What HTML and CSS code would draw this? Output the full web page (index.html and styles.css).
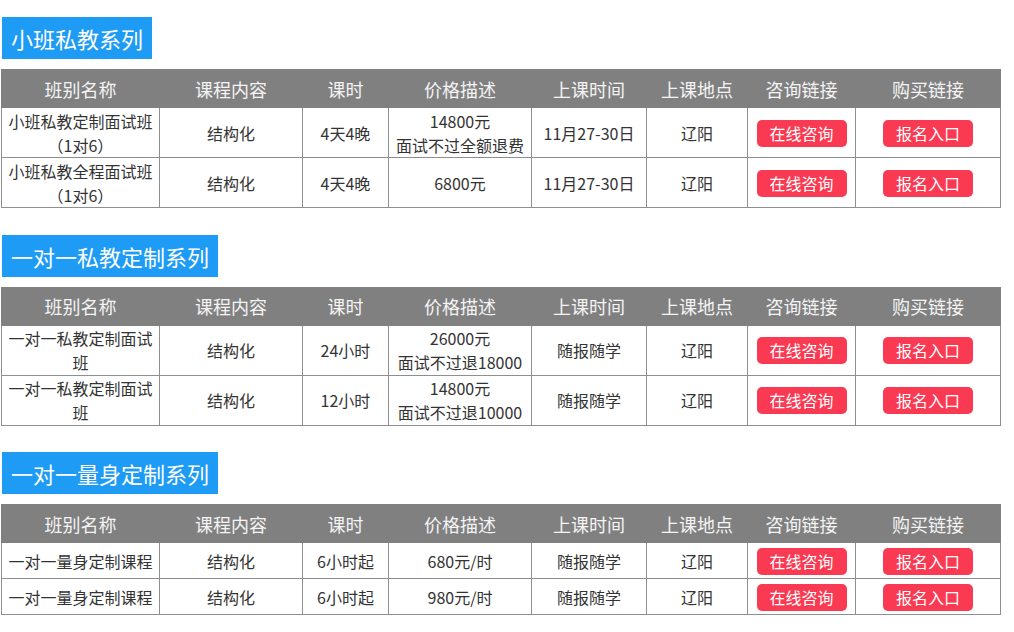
FILE: index.html
```html
<!DOCTYPE html>
<html lang="zh-CN">
<head>
<meta charset="utf-8">
<title>课程</title>
<link rel="stylesheet" href="styles.css">
</head>
<body>
<div class="page">
  <section class="series">
    <h2 class="title">小班私教系列</h2>
    <table class="course">
      <colgroup><col class="c1"><col class="c2"><col class="c3"><col class="c4"><col class="c5"><col class="c6"><col class="c7"><col class="c8"></colgroup>
      <thead><tr><th>班别名称</th><th>课程内容</th><th>课时</th><th>价格描述</th><th>上课时间</th><th>上课地点</th><th>咨询链接</th><th>购买链接</th></tr></thead>
      <tbody>
        <tr class="tall"><td>小班私教定制面试班<br>（1对6）</td><td>结构化</td><td>4天4晚</td><td>14800元<br>面试不过全额退费</td><td>11月27-30日</td><td>辽阳</td><td><a class="btn">在线咨询</a></td><td><a class="btn">报名入口</a></td></tr>
        <tr class="tall"><td>小班私教全程面试班<br>（1对6）</td><td>结构化</td><td>4天4晚</td><td>6800元</td><td>11月27-30日</td><td>辽阳</td><td><a class="btn">在线咨询</a></td><td><a class="btn">报名入口</a></td></tr>
      </tbody>
    </table>
  </section>
  <section class="series">
    <h2 class="title">一对一私教定制系列</h2>
    <table class="course">
      <colgroup><col class="c1"><col class="c2"><col class="c3"><col class="c4"><col class="c5"><col class="c6"><col class="c7"><col class="c8"></colgroup>
      <thead><tr><th>班别名称</th><th>课程内容</th><th>课时</th><th>价格描述</th><th>上课时间</th><th>上课地点</th><th>咨询链接</th><th>购买链接</th></tr></thead>
      <tbody>
        <tr class="tall"><td>一对一私教定制面试<br>班</td><td>结构化</td><td>24小时</td><td>26000元<br>面试不过退18000</td><td>随报随学</td><td>辽阳</td><td><a class="btn">在线咨询</a></td><td><a class="btn">报名入口</a></td></tr>
        <tr class="tall"><td>一对一私教定制面试<br>班</td><td>结构化</td><td>12小时</td><td>14800元<br>面试不过退10000</td><td>随报随学</td><td>辽阳</td><td><a class="btn">在线咨询</a></td><td><a class="btn">报名入口</a></td></tr>
      </tbody>
    </table>
  </section>
  <section class="series">
    <h2 class="title">一对一量身定制系列</h2>
    <table class="course">
      <colgroup><col class="c1"><col class="c2"><col class="c3"><col class="c4"><col class="c5"><col class="c6"><col class="c7"><col class="c8"></colgroup>
      <thead><tr><th>班别名称</th><th>课程内容</th><th>课时</th><th>价格描述</th><th>上课时间</th><th>上课地点</th><th>咨询链接</th><th>购买链接</th></tr></thead>
      <tbody>
        <tr class="short"><td>一对一量身定制课程</td><td>结构化</td><td>6小时起</td><td>680元/时</td><td>随报随学</td><td>辽阳</td><td><a class="btn">在线咨询</a></td><td><a class="btn">报名入口</a></td></tr>
        <tr class="short"><td>一对一量身定制课程</td><td>结构化</td><td>6小时起</td><td>980元/时</td><td>随报随学</td><td>辽阳</td><td><a class="btn">在线咨询</a></td><td><a class="btn">报名入口</a></td></tr>
      </tbody>
    </table>
  </section>
</div>
</body>
</html>
```

FILE: styles.css
```css
* { box-sizing: border-box; }
html, body { margin: 0; padding: 0; background: #fff; }
body {
  font-family: "Noto Sans CJK SC", "Microsoft YaHei", "Noto Sans", sans-serif;
  color: #333;
}
.page {
  padding: 17px 0 0 1px;
  display: flex;
  flex-direction: column;
  gap: 26.5px;
}
.series {
  display: flex;
  flex-direction: column;
  align-items: flex-start;
  gap: 10px;
}
.title {
  margin: 0 0 0 1px;
  height: 42px;
  padding: 0 9px;
  background: #1e9bf4;
  color: #fff;
  font-size: 22px;
  font-weight: normal;
  line-height: 42px;
}
.course {
  width: 999px;
  table-layout: fixed;
  border-collapse: collapse;
  font-size: 16px;
}
.c1 { width: 158px; }
.c2 { width: 143px; }
.c3 { width: 86px; }
.c4 { width: 143px; }
.c5 { width: 115px; }
.c6 { width: 101px; }
.c7 { width: 108px; }
.c8 { width: 145px; }
.course th {
  height: 38px;
  padding: 0;
  background: #808080;
  color: #f4f4f4;
  font-size: 18px;
  font-weight: normal;
  border: 1px solid #808080;
  text-align: center;
  vertical-align: middle;
}
.course td {
  padding: 0;
  border: 1px solid #8f8f8f;
  text-align: center;
  vertical-align: middle;
  line-height: 24px;
  color: #333;
}
.course tr.tall td { height: 50px; }
.course tr.short td { height: 36px; }
.btn {
  display: inline-block;
  width: 90px;
  height: 27px;
  line-height: 27px;
  background: #fa3a52;
  color: #fff;
  border-radius: 5px;
  font-size: 16px;
  text-decoration: none;
  vertical-align: middle;
}
```
